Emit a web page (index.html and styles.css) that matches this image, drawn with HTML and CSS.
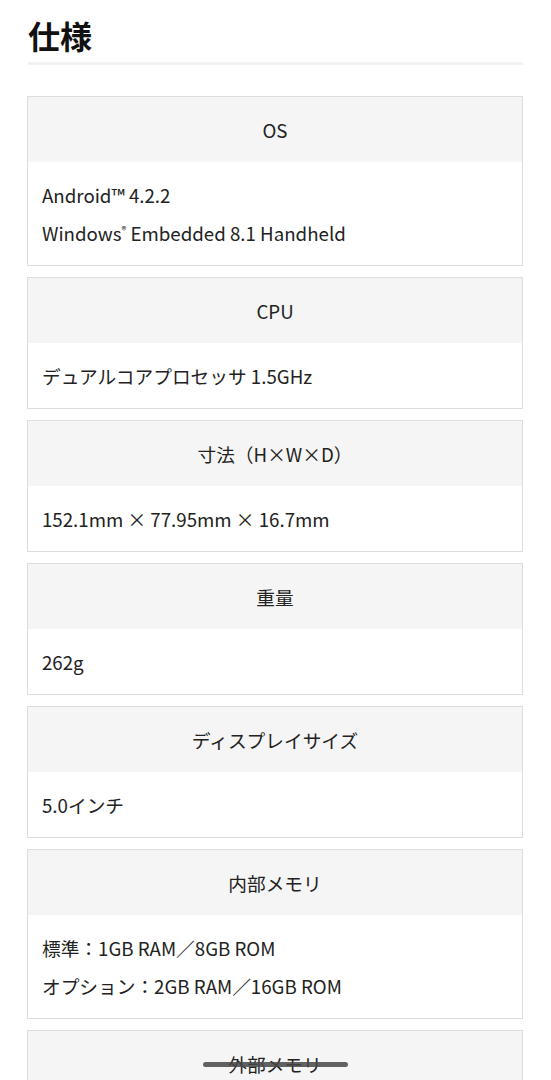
FILE: index.html
```html
<!DOCTYPE html>
<html lang="ja">
<head>
<meta charset="utf-8">
<title>仕様</title>
<link rel="stylesheet" href="styles.css">
</head>
<body>
<main class="page">
  <h1 class="title">仕様</h1>
  <div class="specs">
    <section class="spec">
      <h2 class="spec-head">OS</h2>
      <div class="spec-body">
        <p>Android™ 4.2.2</p>
        <p>Windows<sup>®</sup> Embedded 8.1 Handheld</p>
      </div>
    </section>
    <section class="spec">
      <h2 class="spec-head">CPU</h2>
      <div class="spec-body"><p>デュアルコアプロセッサ 1.5GHz</p></div>
    </section>
    <section class="spec">
      <h2 class="spec-head">寸法（H×W×D）</h2>
      <div class="spec-body"><p>152.1mm × 77.95mm × 16.7mm</p></div>
    </section>
    <section class="spec">
      <h2 class="spec-head">重量</h2>
      <div class="spec-body"><p>262g</p></div>
    </section>
    <section class="spec">
      <h2 class="spec-head">ディスプレイサイズ</h2>
      <div class="spec-body"><p>5.0インチ</p></div>
    </section>
    <section class="spec">
      <h2 class="spec-head">内部メモリ</h2>
      <div class="spec-body">
        <p>標準：1GB RAM／8GB ROM</p>
        <p>オプション：2GB RAM／16GB ROM</p>
      </div>
    </section>
    <section class="spec">
      <h2 class="spec-head">外部メモリ</h2>
    </section>
  </div>
</main>
<div class="home-bar"></div>
</body>
</html>
```
FILE: styles.css
```css
html, body {
  margin: 0;
  padding: 0;
  background: #fff;
}
body {
  font-family: "Noto Sans CJK JP", "Noto Sans", sans-serif;
  color: #222;
  font-size: 18.7px;
}
.page {
  padding: 0 28px 0 27px;
}
.title {
  margin: 0 0 31px 1px;
  padding: 11px 0 3px;
  font-size: 32px;
  line-height: 48px;
  font-weight: 700;
  color: #111;
  border-bottom: 3px solid #f2f2f2;
}
.specs {
  display: flex;
  flex-direction: column;
  gap: 11px;
}
.spec {
  border: 1px solid #ddd;
}
.spec-head {
  margin: 0;
  padding: 14px 14px 13px;
  background: #f5f5f5;
  font-size: 18.7px;
  font-weight: 400;
  line-height: 38px;
  text-align: center;
  color: #222;
}
.spec-body {
  padding: 14px 14px 13px;
}
.spec-body p {
  margin: 0;
  line-height: 38px;
}
.spec-body sup {
  font-size: 10px;
  line-height: 0;
  vertical-align: 7px;
}
.home-bar {
  position: fixed;
  left: 203px;
  bottom: 13px;
  width: 145px;
  height: 5px;
  border-radius: 3px;
  background: rgba(70, 70, 70, 0.85);
}
```
